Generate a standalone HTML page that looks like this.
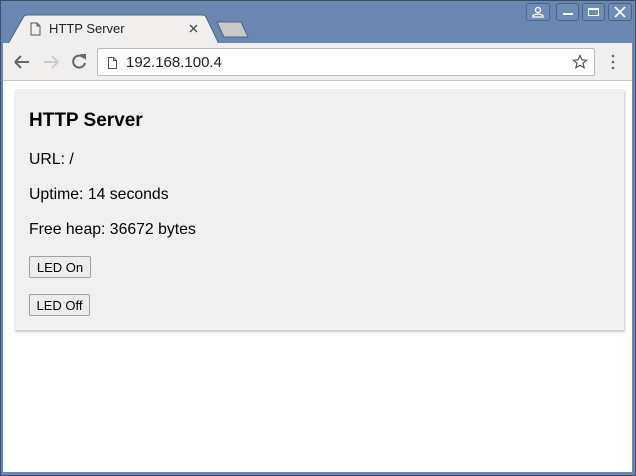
<!DOCTYPE html>
<html><head><style>
*{margin:0;padding:0;box-sizing:border-box}
body{width:636px;height:476px;background:#6584ad;font-family:"Liberation Sans",sans-serif;position:relative;overflow:hidden}
.frame{position:absolute;left:0;top:0;width:636px;height:476px;border:1px solid #3c4f6a;background:#6987b0}
.toolbar{position:absolute;left:3px;top:43px;width:629px;height:38px;background:#f0efee;border-bottom:1px solid #c8c8c8}
.omni{position:absolute;left:97px;top:48px;width:498px;height:28px;background:#fff;border:1px solid #bdbdbd;border-radius:2px}
.content{position:absolute;left:3px;top:81px;width:629px;height:391px;background:#fff}
.card{position:absolute;left:11px;top:8px;width:610px;height:241px;background:#f0f0f0;box-shadow:1px 2px 2px #ccc}
h1{position:absolute;left:15px;top:21px;font-size:19px;font-weight:bold;color:#000}
p{position:absolute;left:15px;font-size:15.8px;color:#000;white-space:nowrap}
button{position:absolute;left:15px;height:22px;font-family:"Liberation Sans",sans-serif;font-size:13px;background:#ececec;border:1px solid #a0a0a0;border-radius:2px;padding:0;color:#000;white-space:nowrap;text-align:center}
.wb{position:absolute;top:3px;height:18px;border:1px solid #4a6388;border-radius:3px;background:#6f8cb4}
</style></head><body>
<div class="frame"></div>
<div class="wb" style="left:526px;width:24px"><svg width="22" height="16"><circle cx="11" cy="6" r="2.5" fill="none" stroke="#fff" stroke-width="1.3"/><path d="M6 13h10v-1.5q-5-3-10 0z" fill="none" stroke="#fff" stroke-width="1.3"/></svg></div>
<div class="wb" style="left:556px;width:23px"><div style="position:absolute;left:6px;top:9px;width:10px;height:2px;background:#fff"></div></div>
<div class="wb" style="left:582px;width:23px"><div style="position:absolute;left:5px;top:4px;width:11px;height:8px;border:1.5px solid #fff;border-top-width:2.5px"></div></div>
<div class="wb" style="left:608px;width:24px"><svg width="22" height="16"><path d="M6 3l10 10M16 3L6 13" stroke="#fff" stroke-width="1.6"/></svg></div>
<svg style="position:absolute;left:0;top:0" width="636" height="45">
<path d="M8 44 L24 16 Q26 15 28 15 L202 15 Q205 15 206 17 L219 44 Z" fill="#f0efee" stroke="#4f6589"/>
<path d="M217 22 L241 22 L248 37 L224 37 Z" fill="#c9c9c9" stroke="#4f6589"/>
</svg>
<div style="position:absolute;left:49px;top:21px;font-size:13px;color:#222">HTTP Server</div>
<div class="toolbar"></div>
<svg style="position:absolute;left:0;top:0" width="636" height="80">
<path d="M31 23h6l3 3v9h-9z M37 23v3h3" fill="none" stroke="#555" stroke-width="1"/>
<path d="M190 25l7 7M197 25l-7 7" stroke="#555" stroke-width="1.5"/>
<path d="M15 62h14M15 62l6-6M15 62l6 6" stroke="#666" stroke-width="2" fill="none"/>
<path d="M44 62h14M58 62l-6-6M58 62l-6 6" stroke="#ccc" stroke-width="2" fill="none"/>
<path d="M84 58a6 6 0 1 0 1 5" stroke="#666" stroke-width="2" fill="none"/><path d="M80 54h6v6z" fill="#666"/>
<circle cx="613" cy="56" r="1.3" fill="#666"/><circle cx="613" cy="62" r="1.3" fill="#666"/><circle cx="613" cy="68" r="1.3" fill="#666"/>
</svg>
<div class="omni">
<svg style="position:absolute;left:9px;top:7px" width="12" height="14"><path d="M1.5 1.5h5l3 3v8h-8z M6.5 1.5v3h3" fill="none" stroke="#555"/></svg>
<div style="position:absolute;left:28px;top:5px;font-size:15px;color:#222">192.168.100.4</div>
<svg style="position:absolute;left:474px;top:5px" width="16" height="16"><path d="M8 1.5l1.9 4.3 4.6.4-3.5 3 1.1 4.5L8 11.3 3.9 13.7 5 9.2 1.5 6.2l4.6-.4z" fill="none" stroke="#555" stroke-width="1.2"/></svg>
</div>
<div class="content">
<div class="card">
<h1>HTTP Server</h1>
<p style="top:62px">URL: /</p>
<p style="top:97px">Uptime: 14 seconds</p>
<p style="top:132px">Free heap: 36672 bytes</p>
<button style="top:167px;width:62px">LED On</button>
<button style="top:205px;width:61px">LED Off</button>
</div>
</div>
</body></html>
